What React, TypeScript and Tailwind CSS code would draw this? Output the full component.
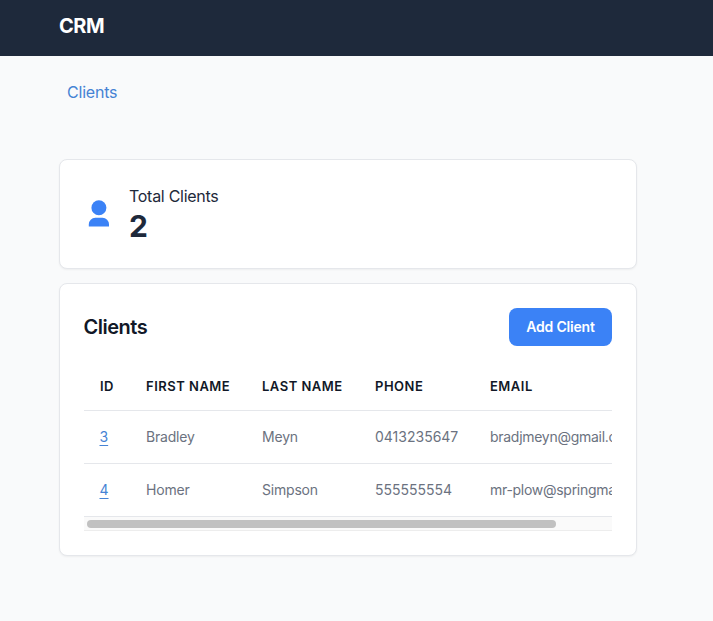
import React from "react";

const clients = [
  { id: "3", first: "Bradley", last: "Meyn", phone: "0413235647", email: "bradjmeyn@gmail.com" },
  { id: "4", first: "Homer", last: "Simpson", phone: "555555554", email: "mr-plow@springmail.com" },
];

const columns = "grid w-[594px] grid-cols-[46px_116px_113px_115px_188px] pl-4";

function UserIcon() {
  return (
    <svg className="mb-[2px] h-[30px] w-[30px] shrink-0 fill-[#3b82f6]" viewBox="0 0 30 30" aria-hidden="true">
      <circle cx="14.9" cy="9.7" r="7.5" />
      <path d="M4.8 28.6v-2.3a6.5 6.5 0 0 1 6.5-6.5h7.2a6.5 6.5 0 0 1 6.5 6.5v2.3z" />
    </svg>
  );
}

export default function App() {
  return (
    <div className="h-[621px] overflow-hidden bg-[#f9fafb] font-['Inter',sans-serif] text-[#1e293b]">
      <header className="flex h-14 items-center bg-[#1e293b] pb-1 pl-[59px]">
        <h1 className="text-xl leading-7 font-bold tracking-[-0.5px] text-white">CRM</h1>
      </header>
      <nav className="flex h-[103px] items-start pt-6 pl-[67px]">
        <a className="text-base leading-6 tracking-[-0.2px] text-[#4683d4]">Clients</a>
      </nav>
      <main className="ml-[59px] flex w-[578px] flex-col gap-[14px]">
        <section className="flex h-[110px] items-center rounded-lg border border-[#e5e7eb] bg-white pl-6 shadow-xs">
          <UserIcon />
          <div className="ml-[15px] pb-px">
            <p className="text-base leading-6 tracking-[-0.28px]">Total Clients</p>
            <p className="text-3xl leading-9 font-bold">2</p>
          </div>
        </section>
        <section className="h-[273px] rounded-lg border border-[#e5e7eb] bg-white px-6 pt-6 shadow-xs">
          <div className="flex h-[38px] items-center justify-between">
            <h2 className="-ml-[0.5px] text-xl font-semibold tracking-[-0.5px] text-[#111827]">Clients</h2>
            <button className="h-[38px] w-[103px] rounded-lg bg-[#3b82f6] text-sm font-semibold tracking-[-0.2px] text-white">Add Client</button>
          </div>
          <div className="mt-4 overflow-hidden text-sm">
            <div className={`${columns} h-[49px] items-center border-b border-[#e5e7eb] text-[13px] font-semibold tracking-[0.5px] text-[#111827]`}>
              <span>ID</span>
              <span>FIRST NAME</span>
              <span>LAST NAME</span>
              <span>PHONE</span>
              <span>EMAIL</span>
            </div>
            {clients.map((c) => (
              <div key={c.id} className={`${columns} h-[53px] items-center border-b border-[#e5e7eb] tracking-[-0.2px] text-[#6b7280]`}>
                <a className="-ml-[0.5px] justify-self-start tracking-normal text-[#4683d4] underline underline-offset-[3px]">{c.id}</a>
                <span>{c.first}</span>
                <span>{c.last}</span>
                <span className="tracking-normal">{c.phone}</span>
                <span className="tracking-[-0.28px]">{c.email}</span>
              </div>
            ))}
            <div className="flex h-[14px] items-center border-b border-[#ededed] bg-[#fafafa] pl-[3px]">
              <div className="h-2 w-[469px] rounded-full bg-[#c1c1c1]" />
            </div>
          </div>
        </section>
      </main>
    </div>
  );
}
